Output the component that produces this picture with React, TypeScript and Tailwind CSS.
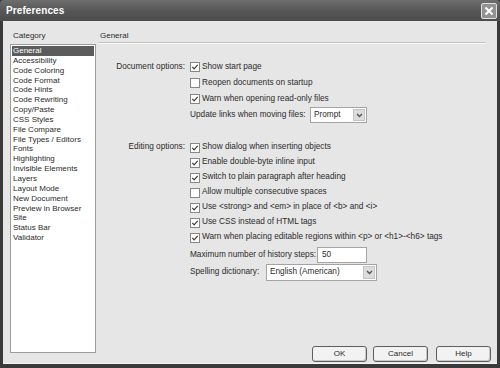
const categories = [
  'General',
  'Accessibility',
  'Code Coloring',
  'Code Format',
  'Code Hints',
  'Code Rewriting',
  'Copy/Paste',
  'CSS Styles',
  'File Compare',
  'File Types / Editors',
  'Fonts',
  'Highlighting',
  'Invisible Elements',
  'Layers',
  'Layout Mode',
  'New Document',
  'Preview in Browser',
  'Site',
  'Status Bar',
  'Validator',
];

const Check = ({ checked }: { checked: boolean }) => (
  <span className="w-[10px] h-[10px] border border-[#878787] bg-white flex items-center justify-center shrink-0">
    {checked && (
      <svg width="8" height="8" viewBox="0 0 8 8">
        <path d="M1.3 3.9 L3.1 5.8 L6.7 1.9" stroke="#3a3a3a" strokeWidth="1.2" fill="none" />
      </svg>
    )}
  </span>
);

const Chevron = () => (
  <span className="w-[12px] self-stretch m-[1px] bg-[#dcdcdc] border border-[#c4c4c4] flex items-center justify-center">
    <svg width="7" height="5" viewBox="0 0 7 5">
      <path d="M1 1 L3.5 3.6 L6 1" stroke="#555" strokeWidth="1.4" fill="none" />
    </svg>
  </span>
);

const Row = ({ label, h, children }: { label?: string; h: string; children: React.ReactNode }) => (
  <div className={`flex items-center ${h}`}>
    <span className="w-[88px] pr-[1px] text-right shrink-0 whitespace-nowrap">{label}</span>
    <div className="ml-[4px] flex items-center gap-[2px] whitespace-nowrap">{children}</div>
  </div>
);

export default function App() {
  return (
    <div className="w-[500px] h-[368px] bg-[#3a3a3a] flex flex-col font-['Liberation_Sans',Arial,sans-serif] text-[8px] text-[#2b2b2b] select-none overflow-hidden">
      {/* title bar */}
      <div className="h-[21px] shrink-0 flex items-center justify-between pl-[6px] pr-[3px] bg-gradient-to-b from-[#6e6e6e] via-[#575757] to-[#4c4c4c] rounded-t-[4px]">
        <span className="text-white font-bold text-[10px] tracking-[0.1px]">Preferences</span>
        <span className="w-[16px] h-[16px] rounded-[2px] border border-[#e0e0e0] bg-[#929292] flex items-center justify-center">
          <svg width="10" height="10" viewBox="0 0 10 10">
            <path d="M1.5 1.5 L8.5 8.5 M8.5 1.5 L1.5 8.5" stroke="#fff" strokeWidth="2" />
          </svg>
        </span>
      </div>

      {/* body */}
      <div className="flex-1 mx-[3px] mb-[4px] bg-[#e6e6e6] flex pt-[10px] pb-[1px] border-b border-[#f4f4f4]">
        {/* category column */}
        <div className="w-[93px] pl-[7px] flex flex-col shrink-0">
          <span className="pl-[3px] h-[13px] leading-[10px]">Category</span>
          <div className="h-[309px] border border-[#9c9c9c] bg-white p-[1px] flex flex-col">
            {categories.map((c, i) => (
              <div
                key={c}
                className={`h-[9.85px] leading-[9.85px] pl-[1px] whitespace-nowrap ${i === 0 ? 'bg-[#5c5c5c] text-white' : ''}`}
              >
                {c}
              </div>
            ))}
          </div>
        </div>

        {/* settings column */}
        <div className="flex-1 ml-[2px] pr-[6px] flex flex-col text-[8.25px]">
          <div className="mr-[5px] h-[12px] leading-[10px] pl-[2px] text-[8px] border-b border-[#c2c2c2] shadow-[0_1px_0_#fafafa]">General</div>

          <div className="mt-[16px] flex flex-col">
            <Row label="Document options:" h="h-[16px]">
              <Check checked />
              <span>Show start page</span>
            </Row>
            <Row h="h-[16px]">
              <Check checked={false} />
              <span>Reopen documents on startup</span>
            </Row>
            <Row h="h-[16px]">
              <Check checked />
              <span>Warn when opening read-only files</span>
            </Row>
            <Row h="h-[16px]">
              <span className="w-[118px]">Update links when moving files:</span>
              <span className="w-[57px] h-[16px] border border-[#a4a4a4] bg-white flex items-center justify-between pl-[3px]">
                Prompt
                <Chevron />
              </span>
            </Row>
          </div>

          <div className="mt-[17px] flex flex-col">
            <Row label="Editing options:" h="h-[15px]">
              <Check checked />
              <span>Show dialog when inserting objects</span>
            </Row>
            <Row h="h-[15px]">
              <Check checked />
              <span>Enable double-byte inline input</span>
            </Row>
            <Row h="h-[15px]">
              <Check checked />
              <span>Switch to plain paragraph after heading</span>
            </Row>
            <Row h="h-[15px]">
              <Check checked={false} />
              <span>Allow multiple consecutive spaces</span>
            </Row>
            <Row h="h-[15px]">
              <Check checked />
              <span>Use &lt;strong&gt; and &lt;em&gt; in place of &lt;b&gt; and &lt;i&gt;</span>
            </Row>
            <Row h="h-[15px]">
              <Check checked />
              <span>Use CSS instead of HTML tags</span>
            </Row>
            <Row h="h-[15px]">
              <Check checked />
              <span>Warn when placing editable regions within &lt;p&gt; or &lt;h1&gt;-&lt;h6&gt; tags</span>
            </Row>
            <div className="mt-[2px]">
              <Row h="h-[16px]">
                <span className="w-[125px]">Maximum number of history steps:</span>
                <span className="w-[50px] h-[16px] border border-[#a4a4a4] bg-white flex items-center pl-[4px]">50</span>
              </Row>
            </div>
            <div className="mt-[1px]">
              <Row h="h-[17px]">
                <span className="w-[74px]">Spelling dictionary:</span>
                <span className="w-[111px] h-[17px] border border-[#a4a4a4] bg-white flex items-center justify-between pl-[3px]">
                  English (American)
                  <Chevron />
                </span>
              </Row>
            </div>
          </div>

          {/* buttons */}
          <div className="mt-auto flex justify-end text-[8px]">
            <button className="w-[55px] h-[16px] border border-[#5e5e5e] rounded-[3px] bg-[#f2f2f2] shadow-[inset_-1px_-1px_0_#c8c8c8]">OK</button>
            <button className="ml-[6px] w-[55px] h-[16px] border border-[#5e5e5e] rounded-[3px] bg-[#f2f2f2] shadow-[inset_-1px_-1px_0_#c8c8c8]">Cancel</button>
            <button className="ml-[8px] w-[55px] h-[16px] border border-[#5e5e5e] rounded-[3px] bg-[#f2f2f2] shadow-[inset_-1px_-1px_0_#c8c8c8]">Help</button>
          </div>
        </div>
      </div>
    </div>
  );
}
